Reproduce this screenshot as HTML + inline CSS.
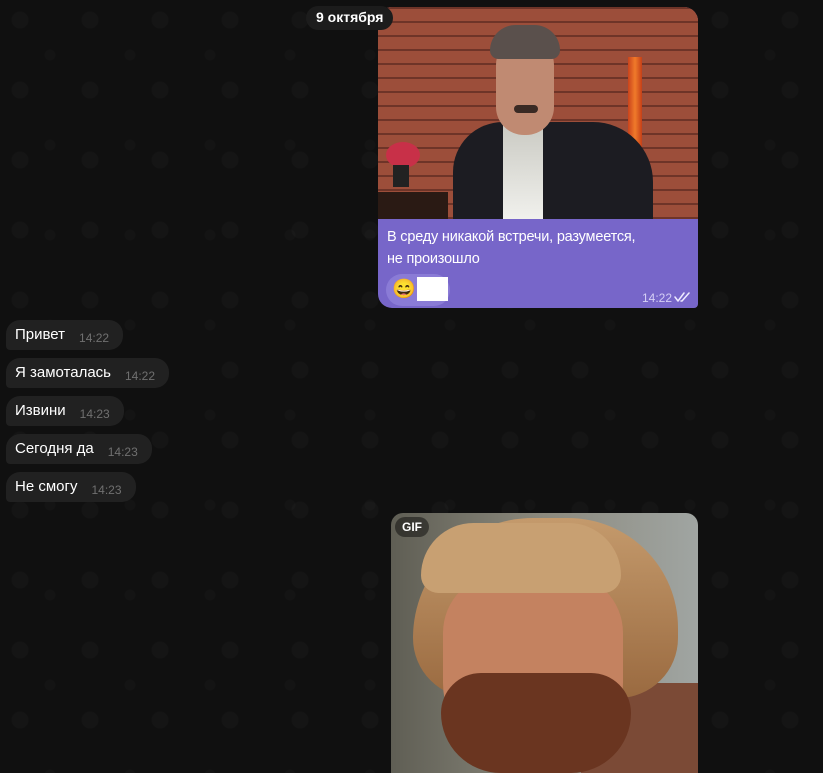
<!DOCTYPE html>
<html><head><meta charset="utf-8">
<style>
html,body{margin:0;padding:0;width:823px;height:773px;overflow:hidden;background:#0e0e0e;font-family:"Liberation Sans",sans-serif;}
.bg{position:absolute;inset:0;background:
radial-gradient(circle at 20px 20px,rgba(255,255,255,0.018) 8px,transparent 9px) 0 0/70px 70px,
radial-gradient(circle at 50px 55px,rgba(255,255,255,0.015) 5px,transparent 6px) 0 0/80px 90px,#101010;}
.date{position:absolute;left:306px;top:6px;height:24px;line-height:23px;padding:0 10px;border-radius:12px;background:#1c1c1c;color:#fff;font-weight:bold;font-size:14px;z-index:3}
.m1{position:absolute;left:378px;top:7px;width:320px;height:301px;border-radius:14px 14px 4px 14px;overflow:hidden;background:#7766c9}
.photo1{position:absolute;left:0;top:0;width:320px;height:212px;overflow:hidden;background:
repeating-linear-gradient(0deg,#6e3428 0 2px,#9c4e3a 2px 14px),#9a4a36;}
.m1 .cap{position:absolute;left:9px;top:219px;color:#fff;font-size:14.5px;line-height:22px;width:310px;white-space:nowrap;letter-spacing:-0.2px}
.react{position:absolute;left:8px;top:267px;width:64px;height:32px;border-radius:16px;background:#8a7bd6}
.time1{position:absolute;right:26px;top:284px;color:#d5cff5;font-size:12px}
.ticks{position:absolute;right:6px;top:285px}
.b{position:absolute;left:6px;height:30px;border-radius:14px 14px 14px 4px;background:#212121;color:#fff;font-size:15px;line-height:30px;padding:0 14px 0 9px;white-space:nowrap}
.b span{color:#707070;font-size:12px;margin-left:14px;position:relative;top:3px}
.m2{position:absolute;left:391px;top:513px;width:307px;height:260px;border-radius:12px 12px 0 0;overflow:hidden;background:linear-gradient(90deg,#5f5e54,#8c8a7e 50%,#a0a5a2)}
.gif{position:absolute;left:4px;top:4px;background:rgba(0,0,0,.45);color:#fff;font-size:12px;font-weight:bold;padding:3px 7px;border-radius:10px}
</style></head><body>
<div class="bg"></div>
<div class="date">9 октября</div>
<div class="m1">
 <div class="photo1">
  <div style="position:absolute;left:250px;top:50px;width:14px;height:160px;background:linear-gradient(90deg,#c9431c,#f07a2a,#c54018)"></div>
  <div style="position:absolute;left:0;top:185px;width:70px;height:30px;background:#2a1a14"></div>
  <div style="position:absolute;left:8px;top:135px;width:34px;height:26px;border-radius:50%;background:#c83048"></div>
  <div style="position:absolute;left:15px;top:158px;width:16px;height:22px;background:#222"></div>
  <div style="position:absolute;left:75px;top:115px;width:200px;height:110px;border-radius:50px 60px 0 0;background:#1c1c22"></div>
  <div style="position:absolute;left:125px;top:115px;width:40px;height:100px;background:linear-gradient(#c9c9c2,#f2f2ee)"></div>
  <div style="position:absolute;left:118px;top:30px;width:58px;height:98px;border-radius:28px;background:#c08a72"></div>
  <div style="position:absolute;left:112px;top:18px;width:70px;height:34px;border-radius:30px 30px 10px 10px;background:#5a504c"></div>
  <div style="position:absolute;left:136px;top:98px;width:24px;height:8px;border-radius:4px;background:#3a2a24"></div>
 </div>
 <div class="cap">В среду никакой встречи, разумеется,<br>не произошло</div>
 <div class="react"><div style="position:absolute;left:6px;top:5px;font-size:19px;line-height:22px">😄</div><div style="position:absolute;left:31px;top:3px;width:31px;height:24px;background:#fff"></div></div>
 <div class="time1">14:22</div>
 <svg class="ticks" width="18" height="10" viewBox="0 0 18 10"><path d="M1 5l3 4 6-8M7 9l1 0 7-8" fill="none" stroke="#eeeaff" stroke-width="1.5" stroke-linecap="round" stroke-linejoin="round"/></svg>
</div>
<div class="b" style="top:320px">Привет<span>14:22</span></div>
<div class="b" style="top:358px">Я замоталась<span>14:22</span></div>
<div class="b" style="top:396px">Извини<span>14:23</span></div>
<div class="b" style="top:434px">Сегодня да<span>14:23</span></div>
<div class="b" style="top:472px">Не смогу<span>14:23</span></div>
<div class="m2">
 <div style="position:absolute;left:190px;top:170px;width:140px;height:110px;border-radius:40px 20px 0 0;background:#7b4a36"></div>
 <div style="position:absolute;left:22px;top:5px;width:265px;height:180px;border-radius:120px 110px 60px 60px;background:linear-gradient(#c49a6c,#9a6a40)"></div>
 <div style="position:absolute;left:52px;top:60px;width:180px;height:190px;border-radius:60px 60px 80px 80px;background:#c48260"></div>
 <div style="position:absolute;left:50px;top:160px;width:190px;height:100px;border-radius:40px 40px 60px 60px;background:#6a3520"></div>
 <div style="position:absolute;left:30px;top:10px;width:200px;height:70px;border-radius:60px 60px 20px 20px;background:#c8a072"></div>
 <div class="gif">GIF</div>
</div>
</body></html>
